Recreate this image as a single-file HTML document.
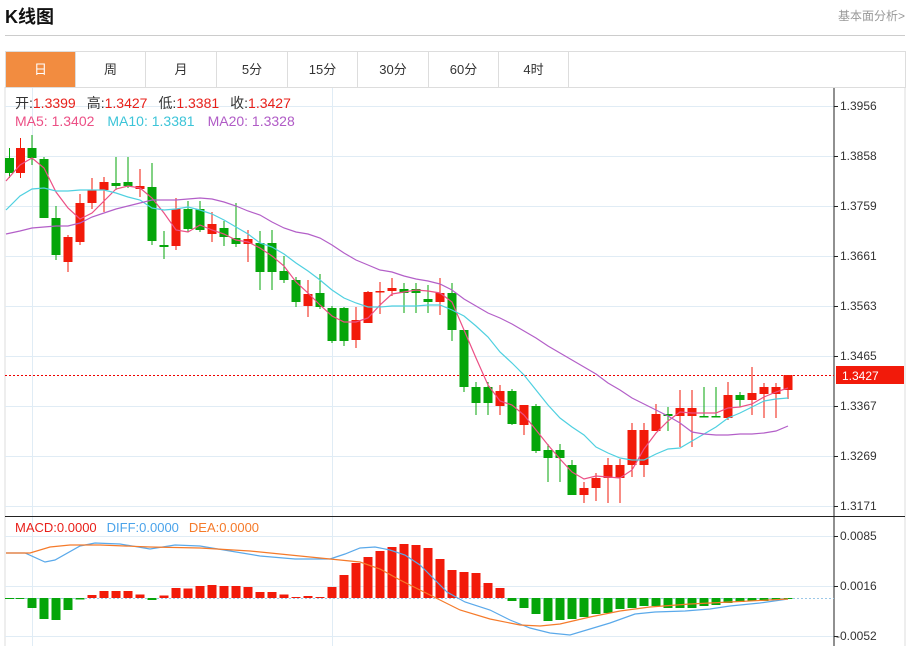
<!DOCTYPE html>
<html><head><meta charset="utf-8"><style>
body{margin:0;width:911px;height:646px;background:#fff;font-family:"Liberation Sans","Noto Sans CJK SC",sans-serif;overflow:hidden;position:relative}
.t{position:absolute;left:5px;top:3px;font-size:18px;font-weight:bold;color:#111}
.more{position:absolute;right:6px;top:7px;font-size:12px;color:#999}
.hr{position:absolute;left:5px;top:35px;width:900px;height:1px;background:#ccc}
.tabs{position:absolute;left:5px;top:51px;width:899px;height:35px;border:1px solid #ddd}
.tab{position:absolute;top:0;height:35px;line-height:35px;text-align:center;font-size:13px;color:#333;border-right:1px solid #ddd}
svg{position:absolute;left:0;top:0}
</style></head><body>
<div class="t">K线图</div><div class="more">基本面分析&gt;</div><div class="hr"></div>
<div class="tabs">
<div class="tab" style="left:0;width:69px;background:#f28c40;color:#fff">日</div>
<div class="tab" style="left:70px;width:69px">周</div>
<div class="tab" style="left:140px;width:70px">月</div>
<div class="tab" style="left:211px;width:70px">5分</div>
<div class="tab" style="left:282px;width:69px">15分</div>
<div class="tab" style="left:352px;width:70px">30分</div>
<div class="tab" style="left:423px;width:69px">60分</div>
<div class="tab" style="left:493px;width:69px">4时</div>
</div>
<svg id="s" width="911" height="646" xmlns="http://www.w3.org/2000/svg" font-family="Liberation Sans, Noto Sans CJK SC, sans-serif">
<line x1="905" y1="87" x2="905" y2="646" stroke="#ddd"/>
<line x1="5" y1="87" x2="5" y2="646" stroke="#ddd"/>
<g id="grid" stroke="#e0ecf5" stroke-width="1"></g>
<line x1="834" y1="88" x2="834" y2="646" stroke="#222"/>
<line x1="5" y1="516.5" x2="905" y2="516.5" stroke="#222"/>
<line x1="5" y1="375.5" x2="834" y2="375.5" stroke="#e00" stroke-dasharray="2,2"/>
<line x1="5" y1="598.5" x2="834" y2="598.5" stroke="#9cc8e8" stroke-dasharray="2,2"/>
<g id="c"></g>
<g id="m" fill="none" stroke-width="1.2"></g>
<g font-size="12" fill="#333">
<text x="840" y="110">1.3956</text><text x="840" y="160">1.3858</text><text x="840" y="210">1.3759</text>
<text x="840" y="260">1.3661</text><text x="840" y="310">1.3563</text><text x="840" y="360">1.3465</text>
<text x="840" y="410">1.3367</text><text x="840" y="460">1.3269</text><text x="840" y="510">1.3171</text>
<text x="840" y="540">0.0085</text><text x="840" y="590">0.0016</text><text x="836" y="640">-0.0052</text>
</g>
<rect x="836" y="366" width="68" height="18" fill="#f21a0a"/>
<text x="842" y="380" font-size="12" fill="#fff">1.3427</text>
<g font-size="14">
<text x="15" y="108"><tspan fill="#333">开:</tspan><tspan fill="#e8201a">1.3399</tspan><tspan fill="#333" dx="11">高:</tspan><tspan fill="#e8201a">1.3427</tspan><tspan fill="#333" dx="11">低:</tspan><tspan fill="#e8201a">1.3381</tspan><tspan fill="#333" dx="11">收:</tspan><tspan fill="#e8201a">1.3427</tspan></text>
<text x="15" y="126"><tspan fill="#ec4f85">MA5: 1.3402</tspan><tspan fill="#3cc4d8" dx="13">MA10: 1.3381</tspan><tspan fill="#b05bc6" dx="13">MA20: 1.3328</tspan></text>
</g>
<text x="15" y="532" font-size="13"><tspan fill="#e8201a">MACD:0.0000</tspan><tspan fill="#4aa3ea" dx="10">DIFF:0.0000</tspan><tspan fill="#f57a2a" dx="10">DEA:0.0000</tspan></text>
</svg>
<script>
var NS="http://www.w3.org/2000/svg";
function el(p,t,a){var e=document.createElementNS(NS,t);for(var k in a)e.setAttribute(k,a[k]);document.getElementById(p).appendChild(e);}
[106,156,206,256,306,356,406,456,506,536,586,636].forEach(function(y){el("grid","line",{x1:5,x2:834,y1:y+.5,y2:y+.5});el("grid","line",{x1:834,x2:838,y1:y+.5,y2:y+.5,stroke:"#222"});});
[32,332].forEach(function(x){el("grid","line",{x1:x+.5,x2:x+.5,y1:88,y2:646});});
var C=[[9.5,0,158,173,148,178],[20.5,1,148,173,138,178],[32,0,148,158,135,165],[44,0,159,218,157,218],[56,0,218,255,206,260],[68,1,237,262,235,272],[80,1,203,242,194,245],[92,1,190,203,178,209],[104,1,182,190,177,212],[116,0,183,186,157,190],[128,0,182,186,157,188],[140,1,186,189,169,197],[152,0,187,241,163,245],[164,0,245,247,231,259],[176,1,209,246,198,250],[188,0,209,229,201,232],[200,0,209,230,201,232],[212,1,224,234,212,242],[224,0,228,237,221,246],[236,0,238,244,203,247],[248,1,239,244,230,262],[260,0,243,272,231,290],[272,0,243,272,230,290],[284,0,271,280,256,283],[296,0,280,302,277,307],[308,1,294,306,280,317],[320,0,293,307,274,309],[332,0,308,341,306,343],[344,0,308,341,307,346],[356,1,320,340,307,348],[368,1,292,323,291,323],[380,1,291,292,282,314],[392,1,288,291,278,296],[404,0,289,293,283,313],[416,0,289,293,283,313],[428,0,299,302,285,313],[440,1,293,302,278,315],[452,0,293,330,283,341],[464,0,330,387,330,392],[476,0,387,403,382,415],[488,0,387,403,382,415],[500,1,391,406,385,415],[512,0,391,424,389,425],[524,1,405,425,405,435],[536,0,406,451,404,453],[548,0,450,458,444,482],[560,0,450,458,444,482],[572,0,465,495,460,495],[584,1,488,495,482,503],[596,1,478,488,473,501],[608,1,465,478,458,503],[620,1,465,478,459,503],[632,1,430,465,423,477],[644,1,430,465,423,477],[656,1,414,431,404,431],[668,0,414,416,407,431],[680,1,408,416,390,447],[692,1,408,416,390,447],[704,0,416,417,387,417],[716,0,416,417,387,417],[728,1,395,418,382,420],[740,0,395,400,392,407],[752,1,393,400,367,415],[764,1,387,394,383,418],[776,1,387,394,383,418],[788,1,375,390,375,399]];
C.forEach(function(c){var col=c[1]?"#f21a0a":"#05a50a";el("c","line",{x1:c[0],x2:c[0],y1:c[4],y2:c[5],stroke:col});el("c","rect",{x:c[0]-4.5,y:c[2],width:9,height:Math.max(1.5,c[3]-c[2]),fill:col});});
var M=[[9.5,-1],[20,-1],[32,-10],[44,-21],[56,-22],[68,-12],[80,-1.5],[92,3],[104,7],[116,7],[128,7],[140,3.5],[152,-2],[164,2.5],[176,10],[188,9.5],[200,12],[212,13],[224,12],[236,12],[248,11],[260,6],[272,6],[284,3.5],[296,1],[308,2],[320,1],[332,11],[344,23],[356,35],[368,41],[380,47],[392,51],[404,54],[416,53],[428,50],[440,39],[452,28],[464,26],[476,25],[488,15],[500,10],[512,-3],[524,-10],[536,-16],[548,-23],[560,-22],[572,-21],[584,-19],[596,-16],[608,-15],[620,-11],[632,-10],[644,-8],[656,-8],[668,-10],[680,-10],[692,-10],[704,-8],[716,-7],[728,-5],[740,-4],[752,-3],[764,-3],[776,-2],[788,-1]];
M.forEach(function(b){var h=b[1];el("c","rect",{x:b[0]-4.5,y:h>0?598-h:598,width:9,height:Math.abs(h),fill:h>0?"#f21a0a":"#05a50a"});});
function pl(pts,col){el("m","polyline",{points:pts,stroke:col});}
pl("6,181 20,165 32,158 44,168 56,192 68,208 80,219 92,213 104,201 116,189 128,186 140,188 152,198 164,213 176,230 188,232 200,225 212,230 224,234 236,240 248,242 260,248 272,256 284,266 296,282 308,293 320,305 332,316 344,322 356,322 368,318 380,305 392,294 404,292 416,290 428,291 440,293 452,302 464,330 476,358 488,385 500,401 512,405 524,415 536,430 548,445 560,459 572,472 584,479 596,476 608,477 620,478 632,470 644,449 656,433 668,421 680,412 692,413 704,413 716,413 728,408 740,407 752,404 764,397 776,392 788,388","#ec4f85");
pl("6,210 20,196 32,189 44,188 56,191 68,191 80,190 92,190 104,190 116,193 128,197 140,200 152,208 164,210 176,209 188,207 200,210 212,214 224,220 236,227 248,234 260,243 272,247 284,254 296,263 308,271 320,280 332,290 344,298 356,303 368,307 380,307 392,306 404,306 416,306 428,305 440,305 452,310 464,316 476,326 488,337 500,352 512,363 524,375 536,390 548,405 560,418 572,427 584,435 596,447 608,453 620,458 632,460 644,460 656,454 668,449 680,448 692,441 704,434 716,427 728,418 740,413 752,407 764,401 776,399 788,398","#4fd0e0");
pl("6,234 20,231 32,228 44,227 56,226 68,226 80,223 92,217 104,213 116,209 128,206 140,203 152,200 164,200 176,200 188,199 200,198 212,199 224,202 236,206 248,211 260,215 272,222 284,228 296,232 308,234 320,238 332,245 344,253 356,260 368,265 380,270 392,272 404,276 416,279 428,281 440,284 452,290 464,299 476,306 488,313 500,318 512,324 524,331 536,338 548,346 560,353 572,360 584,367 596,374 608,383 620,390 632,398 644,404 656,410 668,416 680,423 692,432 704,434 716,435 728,435 740,434 752,434 764,433 776,431 788,426","#b35fc8");
pl("6,553 25,553 45,562 55,560 80,546 95,543 120,544 150,549 175,545 200,546 230,551 260,556 295,559 330,559 345,554 360,548 375,547 390,550 405,555 420,565 435,580 447,592 465,602 490,610 510,620 530,628 550,633 570,635 590,629 610,623 635,614 655,612 685,611 710,609 730,606 760,603 788,599","#5aa9ea");
pl("6,553 30,553 50,547 70,545 100,545 150,547 200,548 250,551 300,556 340,560 360,562 380,569 400,580 420,590 440,600 460,610 490,619 520,625 540,626 560,624 590,617 620,611 650,607 690,604 730,602 788,599","#f57a2a");
</script>
</body></html>
